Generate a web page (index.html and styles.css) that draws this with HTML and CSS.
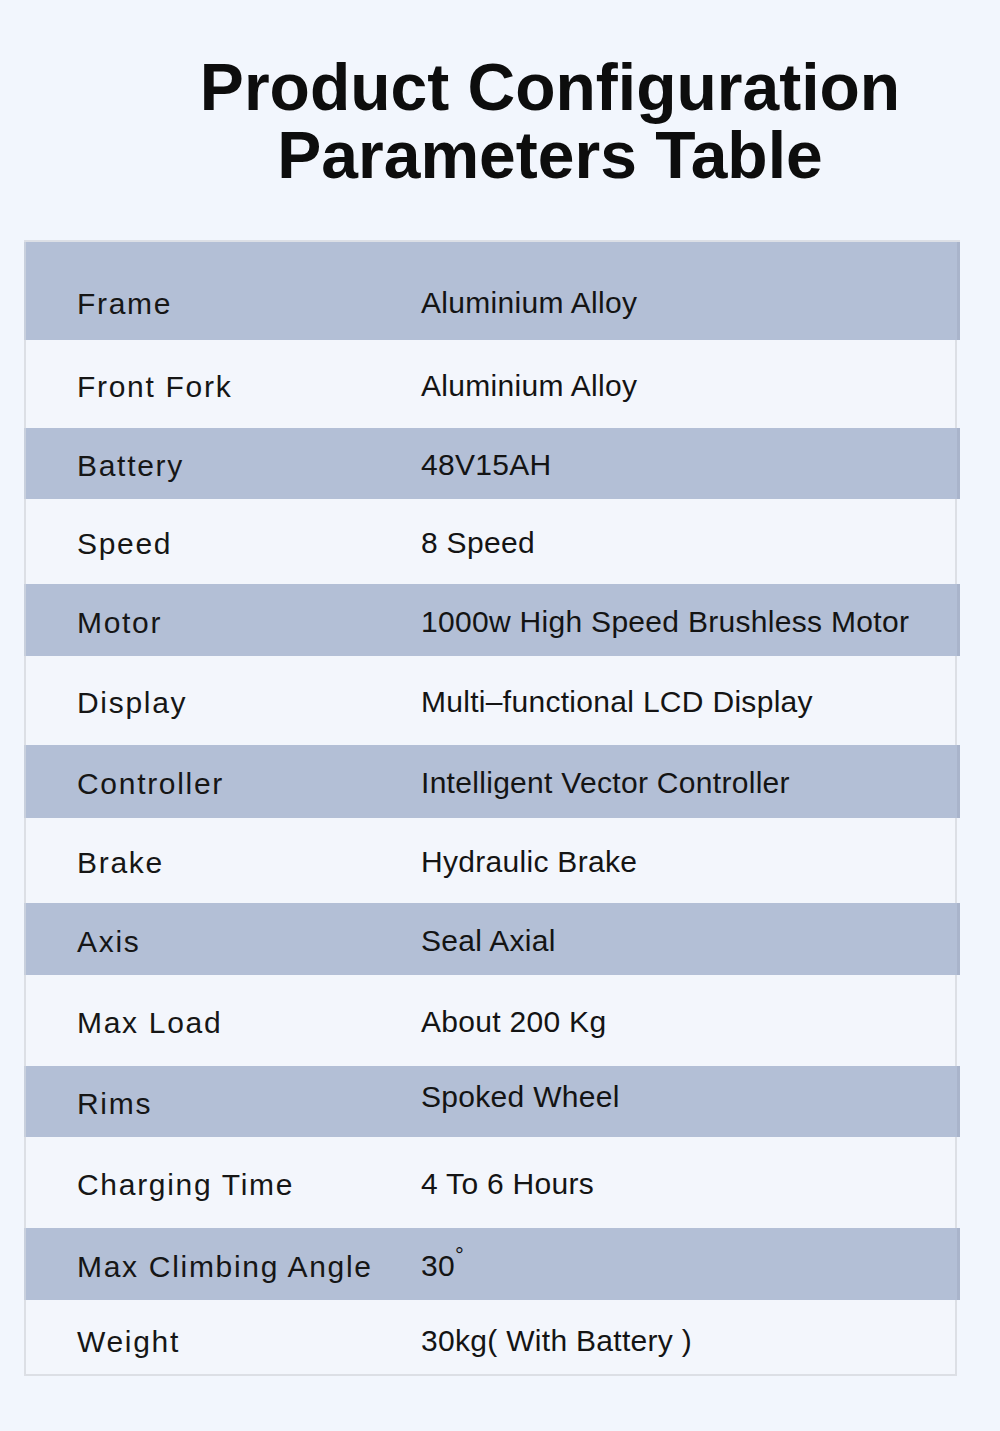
FILE: index.html
```html
<!DOCTYPE html>
<html lang="en">
<head>
<meta charset="utf-8">
<title>Product Configuration Parameters Table</title>
<link rel="stylesheet" href="styles.css">
</head>
<body>
<div class="page">
  <h1 class="title">Product Configuration<br>Parameters Table</h1>
  <div class="table">
    <div class="row blue"><div class="label">Frame</div><div class="value">Aluminium Alloy</div></div>
    <div class="row white"><div class="label">Front Fork</div><div class="value">Aluminium Alloy</div></div>
    <div class="row blue"><div class="label">Battery</div><div class="value">48V15AH</div></div>
    <div class="row white"><div class="label">Speed</div><div class="value">8 Speed</div></div>
    <div class="row blue"><div class="label">Motor</div><div class="value">1000w High Speed Brushless Motor</div></div>
    <div class="row white"><div class="label">Display</div><div class="value">Multi&#8211;functional LCD Display</div></div>
    <div class="row blue"><div class="label">Controller</div><div class="value">Intelligent Vector Controller</div></div>
    <div class="row white"><div class="label">Brake</div><div class="value">Hydraulic Brake</div></div>
    <div class="row blue"><div class="label">Axis</div><div class="value">Seal Axial</div></div>
    <div class="row white"><div class="label">Max Load</div><div class="value">About 200 Kg</div></div>
    <div class="row blue"><div class="label">Rims</div><div class="value raised">Spoked Wheel</div></div>
    <div class="row white"><div class="label">Charging Time</div><div class="value">4 To 6 Hours</div></div>
    <div class="row blue"><div class="label">Max Climbing Angle</div><div class="value">30<sup class="deg">&#176;</sup></div></div>
    <div class="row white"><div class="label">Weight</div><div class="value">30kg( With Battery )</div></div>
  </div>
</div>
</body>
</html>
```
FILE: styles.css
```css
html, body {
  margin: 0;
  padding: 0;
  background: #f2f6fd;
}
body {
  font-family: "Liberation Sans", Arial, sans-serif;
  color: #151515;
}
.page {
  width: 1000px;
  height: 1431px;
  overflow: hidden;
}
.title {
  margin: 53px 0 0 100px;
  font-size: 66px;
  line-height: 68px;
  font-weight: 700;
  letter-spacing: 0;
  text-align: center;
  color: #0d0d0d;
}
.table {
  margin: 51px 0 0 24px;
  width: 936px;
  border-top: 2px solid #dcdfe6;
  display: flex;
  flex-direction: column;
}
.row {
  display: flex;
  align-items: center;
  box-sizing: border-box;
  padding-top: 5px;
}
.row.blue {
  background: #b3bfd6;
  border-left: 2px solid #c9d0dd;
  border-right: 3px solid #a9b4cb;
}
.row.white {
  background: #f3f6fc;
  border-left: 2px solid #dcdfe5;
  border-right: 2px solid #dcdfe5;
  margin-right: 3px;
}
.row:last-child {
  border-bottom: 2px solid #dcdfe5;
}
.row:nth-child(1) { height: 98px; padding-top: 26px; }
.row:nth-child(2) { height: 88px; }
.row:nth-child(3) { height: 71px; }
.row:nth-child(4) { height: 85px; }
.row:nth-child(5) { height: 72px; }
.row:nth-child(6) { height: 89px; }
.row:nth-child(7) { height: 73px; }
.row:nth-child(8) { height: 85px; }
.row:nth-child(9) { height: 72px; }
.row:nth-child(10) { height: 91px; }
.row:nth-child(11) { height: 71px; }
.row:nth-child(12) { height: 91px; }
.row:nth-child(13) { height: 72px; }
.row:nth-child(14) { height: 76px; padding-top: 9px; }
.label {
  width: 395px;
  flex: none;
  box-sizing: border-box;
  padding-left: 51px;
  font-size: 30px;
  letter-spacing: 1.7px;
  color: #161616;
}
.value {
  font-size: 30px;
  letter-spacing: 0.3px;
  color: #141414;
  padding-bottom: 2px;
}
.value.raised {
  padding-bottom: 14px;
}
.deg {
  font-size: 22px;
  vertical-align: top;
  line-height: 1;
  position: relative;
  top: -4px;
}
```
